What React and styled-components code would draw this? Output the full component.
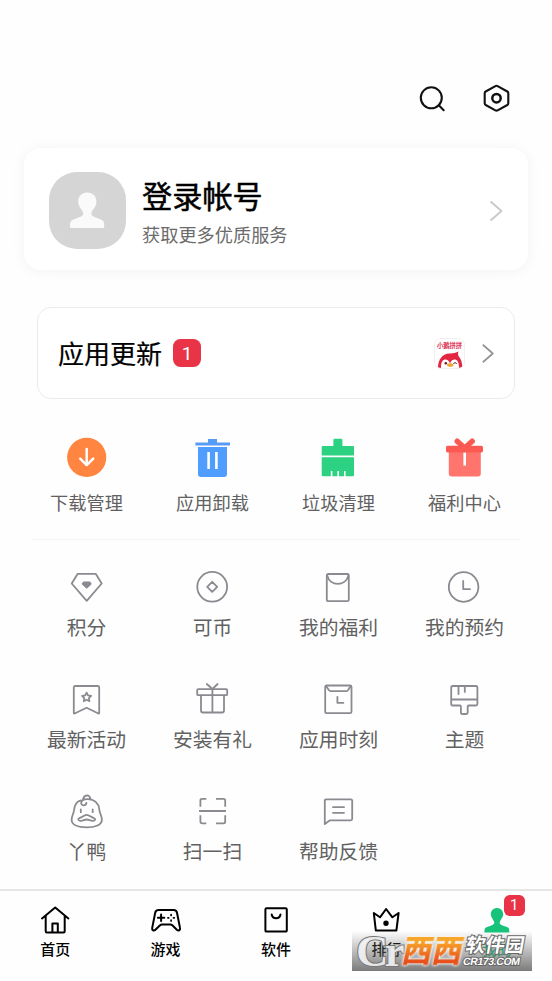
import React from "react";
import styled, { createGlobalStyle } from "styled-components";

const GlobalStyle = createGlobalStyle`
  * {
    box-sizing: border-box;
  }

  body {
    margin: 0;
    background: #fff;
    font-family: Roboto, "Noto Sans CJK SC", sans-serif;
  }
`;

const Page = styled.div`
  width: 552px;
  height: 981px;
  display: flex;
  flex-direction: column;
  background: #fefefe;
  overflow: hidden;

  > * {
    flex-shrink: 0;
  }
`;

const Header = styled.header`
  display: flex;
  justify-content: flex-end;
  gap: 32px;
  height: 148px;
  padding: 82px 40px 0 0;
`;

const Svg = styled.svg`
  display: block;
  flex: none;
  width: ${(p) => p.$size}px;
  height: ${(p) => p.$size}px;
  fill: none;
  stroke: ${(p) => p.$color || "none"};
  stroke-width: ${(p) => p.$weight || 2};
  stroke-linejoin: round;
  stroke-linecap: ${(p) => p.$cap || "round"};
`;

const LoginCard = styled.section`
  display: flex;
  align-items: center;
  height: 122px;
  margin: 0 24px;
  padding: 3px 22px 0 25px;
  border-radius: 17px;
  background: #fff;
  box-shadow: 0 1px 14px rgba(0, 0, 0, 0.05);
`;

const Avatar = styled.div`
  display: flex;
  width: 77px;
  height: 77px;
  border-radius: 28px;
  background: #d5d5d5;
`;

const LoginText = styled.div`
  flex: 1;
  display: flex;
  flex-direction: column;
  margin-left: 16px;
  padding-top: 5px;
`;

const LoginTitle = styled.div`
  font-size: 30.2px;
  line-height: 38px;
  color: #000;
  -webkit-text-stroke: 0.5px #000;
`;

const LoginHint = styled.div`
  margin-top: 7px;
  font-size: 18.2px;
  line-height: 24px;
  color: #6b6b6b;
`;

const UpdateCard = styled.section`
  display: flex;
  align-items: center;
  height: 92px;
  margin: 37px 37px 0;
  padding: 0 14px 0 20px;
  border: 1px solid #ebebeb;
  border-radius: 14px;
  background: #fff;
`;

const UpdateTitle = styled.div`
  padding-top: 3px;
  font-size: 26px;
  line-height: 36px;
  color: #000;
  -webkit-text-stroke: 0.2px #000;
`;

const Badge = styled.span`
  display: flex;
  align-items: center;
  justify-content: center;
  width: ${(p) => p.$size}px;
  height: ${(p) => p.$size}px;
  border-radius: ${(p) => p.$size * 0.27}px;
  background: #e93448;
  color: #fff;
  font-size: ${(p) => p.$font}px;
  font-weight: 400;
  line-height: 1;
`;

const UpdateBadge = styled(Badge)`
  margin: 0 auto 0 11px;
`;

const AppIcon = styled.div`
  display: flex;
  flex-direction: column;
  align-items: center;
  width: 31px;
  height: 31px;
  margin-right: 11px;
  border: 1px solid #f0f0f0;
  border-radius: 7px;
  overflow: hidden;
`;

const AppName = styled.div`
  margin-top: 3px;
  font-size: 6.3px;
  line-height: 8px;
  color: #dc2447;
  white-space: nowrap;
  -webkit-text-stroke: 0.2px #dc2447;
`;

const Grid = styled.div`
  display: grid;
  grid-template-columns: repeat(4, 126px);
  grid-auto-rows: 112px;
  margin: ${(p) => p.$top}px 0 0 23px;
`;

const ServiceGrid = styled(Grid)`
  margin-bottom: -14px;
`;

const Cell = styled.div`
  display: flex;
  flex-direction: column;
  align-items: center;
`;

const CellLabel = styled.div`
  margin-top: ${(p) => (p.$main ? 13 : 9)}px;
  padding-left: 1px;
  font-size: ${(p) => (p.$main ? 18.2 : 19.8)}px;
  line-height: 26px;
  color: #616161;
`;

const Divider = styled.div`
  height: 1px;
  margin: -11px 32px 0;
  background: #f4f4f4;
`;

const TabBar = styled.nav`
  position: relative;
  display: flex;
  height: 92px;
  border-top: 2px solid #e6e6e6;
`;

const Tab = styled.div`
  flex: 1;
  display: flex;
  flex-direction: column;
  align-items: center;
  padding-top: 10px;
  font-size: 15px;
  line-height: 22px;
  font-weight: 500;
  color: ${(p) => (p.$active ? "#17c37b" : "#000")};
`;

const TabIcon = styled.div`
  position: relative;
  height: 38px;
`;

const TabBadge = styled(Badge)`
  position: absolute;
  top: -6px;
  left: 25px;
`;

// watermark strip lies over the last two tabs
const Watermark = styled.div`
  position: absolute;
  left: 352px;
  top: 40px;
  width: 180px;
  height: 40px;
  display: flex;
  align-items: center;
  background: linear-gradient(rgba(120, 120, 120, 0), rgba(100, 100, 100, 0.85));
  white-space: nowrap;
`;

const MarkLogo = styled.div`
  width: 51px;
  padding-left: 4px;
  font: 700 45px/40px "Liberation Serif", serif;
  letter-spacing: -4px;
  color: rgba(245, 245, 245, 0.9);
  -webkit-text-stroke: 2px #777;
  paint-order: stroke fill;
`;

const MarkName = styled.div`
  width: 62px;
  font-size: 30px;
  line-height: 36px;
  font-weight: 900;
  transform: skewX(-12deg);
  filter: drop-shadow(0 0 1px #fff) drop-shadow(0 0 1px #fff);

  span {
    background: linear-gradient(#f7a52b 25%, #e8501c 80%);
    background-clip: text;
    -webkit-background-clip: text;
    color: transparent;
  }
`;

const MarkSide = styled.div`
  display: flex;
  flex-direction: column;
  transform: skewX(-10deg);
  color: #fff;
  -webkit-text-stroke: 2px #666;
  paint-order: stroke fill;
`;

const MarkSite = styled.div`
  font-size: 19.5px;
  line-height: 21px;
  font-weight: 700;
`;

const MarkUrl = styled.div`
  font: 700 10.5px/11px "Liberation Sans", sans-serif;
  letter-spacing: -0.4px;
`;

const Chevron = ({ color }) => (
  <Svg $size={24} $color={color} $weight={1.9} $cap="butt" viewBox="0 0 24 24">
    <path d="M8.5 2.5 19.5 12 8.5 21.5" />
  </Svg>
);

const mainActions = [
  {
    label: "下载管理",
    icon: (
      <>
        <circle cx="20.7" cy="19.4" r="19.6" fill="#ff8541" />
        <path d="M20.7 11v16M14.2 20.6l6.5 6.6 6.5-6.6" stroke="#fff" strokeWidth="2.5" />
      </>
    ),
  },
  {
    label: "应用卸载",
    icon: (
      <>
        <path d="M16 1h9v3.4h13v3H3.4v-3H16z" fill="#569bf5" />
        <path d="M6 9h29v27q0 3-3 3H9q-3 0-3-3z" fill="#4f9dff" />
        <path d="M16.6 14v17M24.4 14v17" stroke="#fff" strokeWidth="2.6" strokeLinecap="butt" />
      </>
    ),
  },
  {
    label: "垃圾清理",
    icon: (
      <>
        <path d="M15.4 2q0-1.2 1.2-1.2h6.6q1.2 0 1.2 1.2v6H35q1 0 1 1v8.4H3.7V9q0-1 1-1h10.7z" fill="#2cd181" />
        <path d="M3.7 19.3H36V37q0 1.2-1.2 1.2h-7.2V33H26v5.2h-5V33h-1.6v5.2h-5V33h-1.6v5.2H5q-1.3 0-1.3-1.2z" fill="#2cd181" />
      </>
    ),
  },
  {
    label: "福利中心",
    icon: (
      <>
        <path d="M4.8 13h32v22.5q0 3-3 3h-26q-3 0-3-3z" fill="#ff756e" />
        <path d="M13.2 3.2 20.7 10l7.5-6.8" stroke="#fa5a52" strokeWidth="5.4" />
        <rect x="2" y="7.8" width="37" height="6.6" rx="1.6" fill="#fa5a52" />
        <path d="M20.7 14.6v13" stroke="#fff" strokeWidth="2.6" strokeLinecap="butt" />
      </>
    ),
  },
];

const services = [
  {
    label: "积分",
    icon: (
      <>
        <path d="M11.7 6.8h18l6 9.7-15 17.3-15-17.3z" />
        <path d="M17.8 15.3h5.8l1.1 1.6-4 3.7-4-3.7z" fill="#8a8a91" />
      </>
    ),
  },
  {
    label: "可币",
    icon: (
      <>
        <circle cx="20.2" cy="19.8" r="14.9" />
        <path d="m20.2 14.8 5 5-5 5-5-5z" />
      </>
    ),
  },
  {
    label: "我的福利",
    icon: (
      <>
        <rect x="8.8" y="7" width="22" height="27.2" rx="1.5" />
        <path d="M9.2 8.5C12 19.6 27.6 19.6 30.4 8.5" />
      </>
    ),
  },
  {
    label: "我的预约",
    icon: (
      <>
        <circle cx="19.6" cy="20" r="14.8" />
        <path d="M19.2 14v8.2H26" />
      </>
    ),
  },
  {
    label: "最新活动",
    icon: (
      <>
        <path d="M9.3 7h22.4q1.5 0 1.5 1.5V34q0 .8-.8.5l-11.8-5.7-12 5.7q-.8.3-.8-.5V8.5Q7.8 7 9.3 7z" />
        <path d="m20.6 13.6 1.4 2.8 3.1.5-2.2 2.2.5 3.1-2.8-1.4-2.8 1.4.5-3.1-2.2-2.2 3.1-.5z" />
      </>
    ),
  },
  {
    label: "安装有礼",
    icon: (
      <>
        <rect x="5.2" y="10.2" width="30" height="6" rx="1" />
        <path d="M9 16.5v15q0 2 2 2h19q2 0 2-2v-15M20.4 10v23.5M14.8 5l5.6 5 5.2-5" />
      </>
    ),
  },
  {
    label: "应用时刻",
    icon: (
      <>
        <rect x="7.2" y="6.5" width="26.3" height="27.7" rx="1.5" />
        <path d="m8.2 7.3 2.8 4q.6.8 1.6.8h15.8q1 0 1.6-.8l2.5-4M19.4 17.8v6h6" />
      </>
    ),
  },
  {
    label: "主题",
    icon: (
      <path d="M8.7 7h23.2q1.5 0 1.5 1.5V25q0 1.5-1.5 1.5h-7.2q-1 0-1 1v5.7q0 1.8-1.8 1.8h-3.2q-1.8 0-1.8-1.8v-5.7q0-1-1-1H8.7q-1.5 0-1.5-1.5V8.5Q7.2 7 8.7 7zM7.5 20.5h25.6M14.5 7.5v7.6M20.8 7.5v5.4" />
    ),
  },
  {
    label: "丫鸭",
    icon: (
      <>
        <path d="M14.8 9.4C10.8 10.6 8.7 14 8.2 18.5c-.3 3.800-2.600 6.300-2.600 10.300 0 5 6.400 7.600 15.100 7.600s15.200-2.600 15.200-7.600c0-4-2.300-6.500-2.600-10.300C32.700 12 28.500 8.600 22 8.200q-6.300-.2-6.800 3.300c-.6 3.500 4.600 3.800 5.200.5M17 8.200q.8-3.600 3.800-3.900 3.100 0 3.900 4.200" />
        <path d="M14.8 18.5v2.700M26.700 18.500v2.700" />
        <path d="M13.200 27.200c2.800-.7 4.800-3.400 7.500-3.400s4.700 2.700 7.500 3.400c1.800.8.8 2.800-1.700 2.600s-3.500-1.300-5.800-1.300-3.300 1.100-5.700 1.300c-2.600.2-3.600-1.800-1.800-2.600z" />
      </>
    ),
  },
  {
    label: "扫一扫",
    icon: (
      <path
        strokeLinecap="butt"
        d="M8.400 15.700V9.500q0-1.700 1.700-1.700h4.200M24 7.800h7.500q1.700 0 1.700 1.700v6.200M33.200 24.300v6.300q0 1.700-1.700 1.700H24M14.300 32.300h-4.200q-1.700 0-1.700-1.700v-6.300M7 20h27"
      />
    ),
  },
  {
    label: "帮助反馈",
    icon: (
      <path d="M8.200 8.300h24.500q1.500 0 1.500 1.500v18q0 1.500-1.500 1.500H12l-5.200 3.800V9.800q0-1.500 1.400-1.500zM15 16.200h11M15 21.800h11" />
    ),
  },
];

const personPath =
  "M18 6.900C14 6.900 11.600 10 11.800 13.600C12 17 14.600 18.500 15.300 21.500C15.600 24 11 25 8 26C5.400 27 5.500 28.500 5.500 31.400H30.300C30.300 28.500 30.400 27 28 26C25 25 20.200 24 20.700 21.500C21.400 18.500 24 17 24.200 13.600C24.400 10 22 6.900 18 6.900z";

const tabs = [
  {
    label: "首页",
    icon: <path d="M5 17.400 18.200 6.500l13.200 10.900M8.700 15v15.200q0 1.200 1.200 1.200h16.600q1.200 0 1.200-1.200V15M15.400 31V22.400h5.400V31" />,
  },
  {
    label: "游戏",
    icon: (
      <>
        <path d="M10.500 8.900h15.200q2.800 0 3.300 2.800l3 15.200c.6 2.500-1.700 3.200-3.200 1.900l-4.200-4.300q-1-.9-2.400-.9h-8q-1.400 0-2.400.9l-4.400 4.300c-1.500 1.300-3.700.6-3.200-1.900l3-15.200q.5-2.800 3.300-2.800z" />
        <path d="M9.900 16.800h6.400M13.100 13.600V20" />
        <path d="M23.100 13.600v.8M23.100 19.200v.8M19.900 16.800h.8M25.500 16.800h.8" strokeWidth="1.7" />
      </>
    ),
  },
  {
    label: "软件",
    icon: (
      <>
        <rect x="7.4" y="7.2" width="21.4" height="23.4" rx="1.2" />
        <path d="M13.700 13.500q.8 3.800 4.400 3.800t4.400-3.800" />
      </>
    ),
  },
  {
    label: "排行",
    icon: (
      <>
        <path d="m5.800 12 2 17.400h20.600L30.600 12l-6.200 4.300L18.100 8 12 16.300z" />
        <circle cx="18" cy="22.2" r="1.7" fill="#000" />
      </>
    ),
  },
  { label: "我的", active: true, icon: <path d={personPath} fill="#17c37b" stroke="none" /> },
];

const App = () => {
  return (
    <>
      <GlobalStyle />
      <Page>
        <Header>
          <Svg $size={32} $color="#111" $weight={2.1} viewBox="0 0 32 32">
            <circle cx="15.3" cy="15.8" r="10.5" />
            <path d="m22.800 23.300 4.900 4.900" />
          </Svg>
          <Svg $size={32} $color="#111" $weight={2.1} viewBox="0 0 32 32">
            <path d="M15.400 4.100q1.100-.6 2.200 0l9.700 5.400q1 .6 1 1.700v10q0 1.200-1 1.800l-9.700 5.300q-1.100.6-2.200 0l-9.700-5.300q-1-.6-1-1.800v-10q0-1.100 1-1.700z" />
            <circle cx="16.5" cy="16.2" r="4.2" strokeWidth="2.5" />
          </Svg>
        </Header>

        <LoginCard>
          <Avatar>
            <Svg $size={77} viewBox="0 0 77 77">
              <path
                d="M38.300 20.500C33 20.500 29.200 24.200 29.200 29.500C29.200 36 34.200 37.500 34.200 42C34.200 45 28 45.500 23.500 48C20.800 49.500 21 52 21 54.500Q21 56 22.500 56H53.700Q55.200 56 55.200 54.500C55.200 52 55.500 49.500 52.800 48C48.500 45.500 42.400 45 42.400 42C42.400 37.500 47.400 36 47.400 29.500C47.400 24.200 43.600 20.500 38.300 20.500z"
                fill="#fafafa"
              />
            </Svg>
          </Avatar>
          <LoginText>
            <LoginTitle>登录帐号</LoginTitle>
            <LoginHint>获取更多优质服务</LoginHint>
          </LoginText>
          <Chevron color="#c9c9c9" />
        </LoginCard>

        <UpdateCard>
          <UpdateTitle>应用更新</UpdateTitle>
          <UpdateBadge $size={28} $font={19}>1</UpdateBadge>
          <AppIcon>
            <AppName>小鹅拼拼</AppName>
            <Svg $size={26} viewBox="0 0 26 26">
              <path d="M1 22C0 10 5 4 12 3.500Q17 4 21.500 1.500Q20.500 4 21.500 6C25 10 26 16 25 22z" fill="#e32642" />
              <path d="M4.500 22C3 14 5 9.500 8.500 9.500Q11.500 9.500 13 13.500Q14.500 9.500 17.500 9.500C21 9.500 23 14 21.500 22z" fill="#fff" />
              <circle cx="8.8" cy="13.2" r="1.3" fill="#672027" />
              <path d="M16.500 13.300q1.500-1.600 3 0" stroke="#672027" strokeWidth="1" />
              <ellipse cx="13.2" cy="15" rx="3.2" ry="1.8" fill="#efa52e" />
            </Svg>
          </AppIcon>
          <Svg $size={24} $color="#969696" $weight={1.8} $cap="butt" viewBox="0 0 24 24">
            <path d="M6.800 3.800 16.800 12.500 6.800 21.200" />
          </Svg>
        </UpdateCard>

        <Grid $top={39}>
          {mainActions.map((item) => (
            <Cell key={item.label}>
              <Svg $size={40} viewBox="0 0 40 40" overflow="visible">
                {item.icon}
              </Svg>
              <CellLabel $main>{item.label}</CellLabel>
            </Cell>
          ))}
        </Grid>
        <Divider />
        <ServiceGrid $top={27}>
          {services.map((item) => (
            <Cell key={item.label}>
              <Svg $size={40} $color="#8a8a91" $weight={1.8} viewBox="0 0 40 40">
                {item.icon}
              </Svg>
              <CellLabel>{item.label}</CellLabel>
            </Cell>
          ))}
        </ServiceGrid>

        <TabBar>
          {tabs.map((tab) => (
            <Tab key={tab.label} $active={tab.active}>
              <TabIcon>
                <Svg $size={36} $color="#000" viewBox="0 0 36 36">
                  {tab.icon}
                </Svg>
                {tab.active && <TabBadge $size={21} $font={15}>1</TabBadge>}
              </TabIcon>
              {tab.label}
            </Tab>
          ))}
          <Watermark>
            <MarkLogo>Cr</MarkLogo>
            <MarkName>
              <span>西西</span>
            </MarkName>
            <MarkSide>
              <MarkSite>软件园</MarkSite>
              <MarkUrl>CR173.COM</MarkUrl>
            </MarkSide>
          </Watermark>
        </TabBar>
      </Page>
    </>
  );
};

export default App;
